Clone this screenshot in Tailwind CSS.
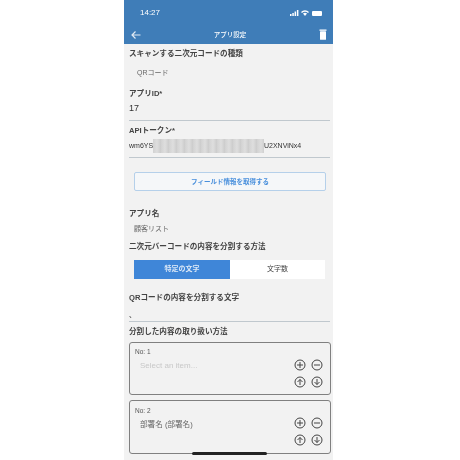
<!DOCTYPE html>
<html lang="ja">
<head>
<meta charset="utf-8">
<script src="https://cdn.jsdelivr.net/npm/@tailwindcss/browser@4"></script>
</head>
<body class="bg-white">
<div class="relative h-[460px] w-[460px] overflow-hidden font-['Liberation_Sans','Noto_Sans_CJK_JP',sans-serif]">
  <div class="relative ml-[124px] h-[460px] w-[209px] overflow-hidden bg-[#f2f2f2] blur-[0.55px]">
    <header class="h-[44px] bg-[#3f7db8] text-white">
      <div class="flex h-[25px] items-center justify-between pl-[16px] pr-[11px] pt-[1px]">
        <span class="text-[8px] font-medium">14:27</span>
        <div class="flex items-center gap-[2px]">
          <svg width="9" height="6" viewBox="0 0 9 6" fill="#fff"><rect x="0" y="4" width="1.5" height="2"/><rect x="2.3" y="3" width="1.5" height="3"/><rect x="4.6" y="1.5" width="1.5" height="4.5"/><rect x="6.9" y="0" width="1.5" height="6"/></svg>
          <svg width="8" height="6" viewBox="0 0 8 6" fill="#fff"><path d="M0 2 A5.5 5.5 0 0 1 8 2 L7 3 A4 4 0 0 0 1 3Z"/><path d="M2 3.6 A3 3 0 0 1 6 3.6 L4 6Z"/></svg>
          <span class="ml-[1px] h-[5px] w-[10px] rounded-[1px] bg-white"></span>
        </div>
      </div>
      <div class="flex h-[19px] items-center justify-between pl-[7px] pr-[6px]">
        <svg width="10" height="10" viewBox="0 0 10 10" fill="none" stroke="#dfe9f3" stroke-width="1.2"><path d="M9.5 5H1M4.5 1.5 1 5l3.5 3.5"/></svg>
        <span class="text-[6.5px] font-medium">アプリ設定</span>
        <svg width="8" height="11" viewBox="0 0 8 11" fill="#fff"><rect x="0.5" y="0.5" width="7" height="1.3"/><rect x="1" y="2.3" width="6" height="8.5" rx="0.6"/></svg>
      </div>
    </header>

    <div class="pl-[5px] pr-[2px]">
      <p class="mt-[5px] text-[7.6px] leading-[10px] font-bold text-[#444]">スキャンする二次元コードの種類</p>
      <p class="mt-[9px] pl-[8px] text-[7px] leading-[10px] text-[#666]">QRコード</p>
      <p class="mt-[11px] text-[7.6px] leading-[10px] font-bold text-[#444]">アプリID*</p>
      <p class="mt-[4px] text-[9px] leading-[10px] text-[#333]">17</p>
      <div class="mt-[7px] mr-[1px] h-[1px] bg-[#c0c8ce]"></div>
      <p class="mt-[5px] text-[7.6px] leading-[10px] font-bold text-[#444]">APIトークン*</p>
      <div class="relative mt-[5px] flex h-[10px] items-center text-[7px] text-[#333]">
        <span class="w-[24px]">wm6YS</span>
        <span class="h-[14px] w-[111px] bg-[repeating-linear-gradient(90deg,#d2d2d2_0px,#dedede_4px,#cbcbcb_8px)]"></span>
        <span>U2XNViNx4</span>
      </div>
      <div class="mt-[6px] mr-[1px] h-[1px] bg-[#c0c8ce]"></div>

      <button class="mt-[14px] ml-[5px] flex h-[19px] w-[192px] items-center justify-center rounded-[2px] border border-[#b5d0ea] bg-[#f5f7f9] text-[6.5px] font-bold text-[#4a90dc]">フィールド情報を取得する</button>

      <p class="mt-[18px] text-[7.6px] leading-[10px] font-bold text-[#444]">アプリ名</p>
      <p class="mt-[5px] pl-[5px] text-[7px] leading-[10px] text-[#666]">顧客リスト</p>
      <p class="mt-[8px] text-[7.6px] leading-[10px] font-bold text-[#444]">二次元バーコードの内容を分割する方法</p>
      <div class="mt-[8px] ml-[5px] flex h-[19px] w-[191px] text-[7px]">
        <div class="flex w-[96px] items-center justify-center bg-[#3f86d8] font-bold text-[#dbe8f7]">特定の文字</div>
        <div class="flex flex-1 items-center justify-center bg-white text-[#444]">文字数</div>
      </div>
      <p class="mt-[14px] text-[7.6px] leading-[10px] font-bold text-[#444]">QRコードの内容を分割する文字</p>
      <p class="mt-[7px] h-[10px] text-[7px] leading-[10px] text-[#333]">、</p>
      <div class="mt-[1px] mr-[1px] h-[1px] bg-[#c0c8ce]"></div>
      <p class="mt-[5px] text-[7.6px] leading-[10px] font-bold text-[#444]">分割した内容の取り扱い方法</p>

      <div class="mt-[5px] flex flex-col gap-[5px]">
        <section class="relative h-[53px] w-[202px] rounded-[3px] border-[1.5px] border-[#808080] px-[5px] pt-[5px]">
          <p class="text-[6.5px] leading-[8px] text-[#555]">No: 1</p>
          <p class="mt-[5px] pl-[5px] text-[8px] leading-[10px] text-[#c8c8c8]">Select an item...</p>
          <div class="absolute top-[16px] right-[7px] grid grid-cols-2 gap-x-[5px] gap-y-[5px] text-[#444]">
            <svg width="12" height="12" viewBox="0 0 12 12" fill="none" stroke="currentColor"><circle cx="6" cy="6" r="5"/><path d="M3 6h6M6 3v6"/></svg>
            <svg width="12" height="12" viewBox="0 0 12 12" fill="none" stroke="currentColor"><circle cx="6" cy="6" r="5"/><path d="M3 6h6"/></svg>
            <svg width="12" height="12" viewBox="0 0 12 12" fill="none" stroke="currentColor"><circle cx="6" cy="6" r="5"/><path d="M6 9V3.5M3.5 6 6 3.5 8.5 6"/></svg>
            <svg width="12" height="12" viewBox="0 0 12 12" fill="none" stroke="currentColor"><circle cx="6" cy="6" r="5"/><path d="M6 3v5.5M3.5 6 6 8.5 8.5 6"/></svg>
          </div>
        </section>
        <section class="relative h-[54px] w-[202px] rounded-[3px] border-[1.5px] border-[#808080] px-[5px] pt-[6px]">
          <p class="text-[6.5px] leading-[8px] text-[#555]">No: 2</p>
          <p class="mt-[5px] pl-[5px] text-[7.6px] leading-[10px] text-[#666]">部署名 (部署名)</p>
          <div class="absolute top-[16px] right-[7px] grid grid-cols-2 gap-x-[5px] gap-y-[5px] text-[#444]">
            <svg width="12" height="12" viewBox="0 0 12 12" fill="none" stroke="currentColor"><circle cx="6" cy="6" r="5"/><path d="M3 6h6M6 3v6"/></svg>
            <svg width="12" height="12" viewBox="0 0 12 12" fill="none" stroke="currentColor"><circle cx="6" cy="6" r="5"/><path d="M3 6h6"/></svg>
            <svg width="12" height="12" viewBox="0 0 12 12" fill="none" stroke="currentColor"><circle cx="6" cy="6" r="5"/><path d="M6 9V3.5M3.5 6 6 3.5 8.5 6"/></svg>
            <svg width="12" height="12" viewBox="0 0 12 12" fill="none" stroke="currentColor"><circle cx="6" cy="6" r="5"/><path d="M6 3v5.5M3.5 6 6 8.5 8.5 6"/></svg>
          </div>
        </section>
      </div>
    </div>
    <div class="absolute bottom-[5px] left-[68px] h-[3px] w-[75px] rounded-full bg-[#222]"></div>
  </div>
</div>
</body>
</html>
